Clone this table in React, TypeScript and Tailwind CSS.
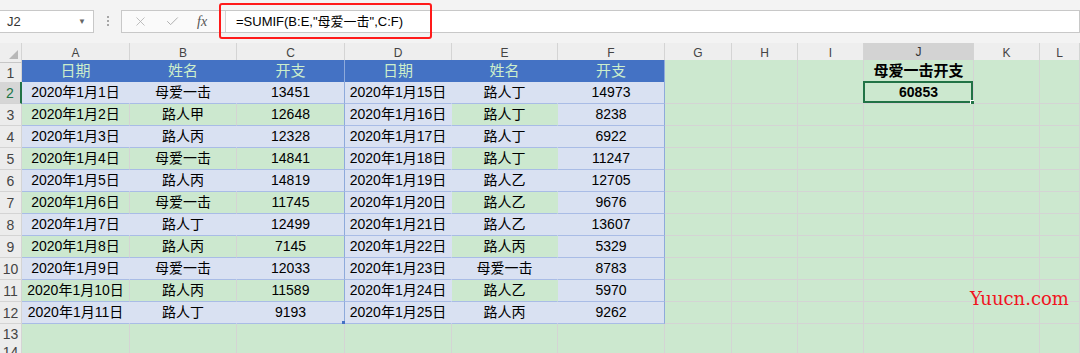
import { Check, X } from "lucide-react";

const left = [
  ["2020年1月1日", "母爱一击", "13451"],
  ["2020年1月2日", "路人甲", "12648"],
  ["2020年1月3日", "路人丙", "12328"],
  ["2020年1月4日", "母爱一击", "14841"],
  ["2020年1月5日", "路人丙", "14819"],
  ["2020年1月6日", "母爱一击", "11745"],
  ["2020年1月7日", "路人丁", "12499"],
  ["2020年1月8日", "路人丙", "7145"],
  ["2020年1月9日", "母爱一击", "12033"],
  ["2020年1月10日", "路人丙", "11589"],
  ["2020年1月11日", "路人丁", "9193"],
];

const right = [
  ["2020年1月15日", "路人丁", "14973"],
  ["2020年1月16日", "路人丁", "8238"],
  ["2020年1月17日", "路人丁", "6922"],
  ["2020年1月18日", "路人丁", "11247"],
  ["2020年1月19日", "路人乙", "12705"],
  ["2020年1月20日", "路人乙", "9676"],
  ["2020年1月21日", "路人乙", "13607"],
  ["2020年1月22日", "路人丙", "5329"],
  ["2020年1月23日", "母爱一击", "8783"],
  ["2020年1月24日", "路人乙", "5970"],
  ["2020年1月25日", "路人丙", "9262"],
];

const COLS = ["A", "B", "C", "D", "E", "F", "G", "H", "I", "J", "K", "L"];
const GRID = "grid grid-cols-[22px_108px_107px_108px_107px_106px_107px_67px_66px_66px_110px_66px_1fr]";

type Fill = "lav" | "none" | "head";
type Edge = "grid" | "blue" | "none";

const fillCls: Record<Fill, string> = {
  lav: "bg-[#d9e1f2] text-black",
  none: "bg-[#cce8cf] text-black",
  head: "bg-[#4472c4] text-[#cdeecb] text-[15px]",
};
const rightCls: Record<Edge, string> = {
  grid: "border-r border-r-[#d4d4d4]",
  blue: "border-r border-r-[#8eaadb]",
  none: "border-r border-r-transparent",
};
const bottomCls: Record<Edge, string> = {
  grid: "border-b border-b-[#d4d4d4]",
  blue: "border-b border-b-[#a9bce6]",
  none: "border-b border-b-transparent",
};

function Cell({
  fill,
  r,
  b,
  children,
}: {
  fill: Fill;
  r: Edge;
  b: Edge;
  children?: React.ReactNode;
}) {
  return (
    <div className={`relative flex items-center justify-center whitespace-nowrap ${fillCls[fill]} ${rightCls[r]} ${bottomCls[b]}`}>
      {children}
    </div>
  );
}

function RowHead({ n, active }: { n: number; active?: boolean }) {
  return active ? (
    <div className="flex items-end justify-center bg-[#d6d6d6] border-r-2 border-r-[#217346] border-b border-b-[#d4d4d4] text-[14px] leading-[20px] text-[#217346]">
      {n}
    </div>
  ) : (
    <div className="flex items-end justify-center bg-[#ececec] border-r border-r-[#d4d4d4] border-b border-b-[#d4d4d4] text-[14px] leading-[20px] text-[#444]">
      {n}
    </div>
  );
}

function sheetCells(from: number, rowNum: number) {
  return COLS.slice(from).map((c) => {
    if (c === "J" && rowNum === 1)
      return (
        <Cell key={c} fill="none" r="grid" b="grid">
          <span className="text-[15px] font-bold">母爱一击开支</span>
        </Cell>
      );
    if (c === "J" && rowNum === 2)
      return (
        <Cell key={c} fill="none" r="grid" b="grid">
          <span className="text-[14px] font-bold">60853</span>
          <div className="absolute -left-[1px] -top-[1px] right-0 bottom-0 border-2 border-[#217346]" />
          <div className="absolute -right-[3px] -bottom-[3px] h-[6px] w-[6px] bg-[#217346] border border-white" />
        </Cell>
      );
    return <Cell key={c} fill="none" r="grid" b="grid" />;
  });
}

function DataRow({ i }: { i: number }) {
  const rowNum = i + 2;
  const odd = rowNum % 2 === 1;
  const fills: Fill[] = odd
    ? ["none", "none", "none", "lav", "none", "lav"]
    : ["lav", "lav", "lav", "lav", "lav", "lav"];
  const vals = [...left[i], ...right[i]];
  return (
    <div className={`${GRID} h-[22px]`}>
      <RowHead n={rowNum} active={rowNum === 2} />
      {vals.map((v, c) => {
        let r: Edge = "none";
        if (c === 2 || c === 5) r = "blue";
        else if (fills[c] === "none" && fills[c + 1] === "none") r = "grid";
        return (
          <Cell key={c} fill={fills[c]} r={r} b="blue">
            <span className="text-[14px]">{v}</span>
            {rowNum === 12 && c === 2 && (
              <div className="absolute right-[-1px] bottom-[-1px] h-[3px] w-[3px] bg-[#4472c4]" />
            )}
          </Cell>
        );
      })}
      {sheetCells(6, rowNum)}
    </div>
  );
}

export default function App() {
  const headers = ["日期", "姓名", "开支", "日期", "姓名", "开支"];
  return (
    <div className="relative h-[353px] w-[1080px] overflow-hidden bg-[#cce8cf] text-[#222] font-['Liberation_Sans','Noto_Sans_CJK_SC',sans-serif]">
      {/* formula bar */}
      <div className="flex h-[43px] items-start bg-[#f3f3f3] pt-[10px]">
        <div className="flex h-[23px] w-[95px] -ml-[1px] items-center justify-between border border-[#c8c8c8] bg-white pl-[7px] pr-[7px] text-[13px] text-[#333]">
          <span>J2</span>
          <span className="text-[8px] text-[#666]">▼</span>
        </div>
        <div className="flex w-[27px] flex-col items-center gap-[2px] pt-[6px]">
          <span className="h-[2px] w-[2px] bg-[#a6a6a6]" />
          <span className="h-[2px] w-[2px] bg-[#a6a6a6]" />
          <span className="h-[2px] w-[2px] bg-[#a6a6a6]" />
        </div>
        <div className="flex h-[23px] flex-1 border border-[#c8c8c8] bg-white">
          <div className="flex w-[103px] items-center bg-[#fafafa]">
            <X size={15} strokeWidth={1.3} className="ml-[11px] text-[#b0b0b0]" />
            <Check size={15} strokeWidth={1.6} className="ml-[17px] text-[#b0b0b0]" />
            <span className="ml-[17px] font-['Liberation_Serif',serif] text-[14px] italic text-[#555]">fx</span>
          </div>
          <div className="w-px bg-[#d4d4d4]" />
          <div className="flex items-center pl-[10px] text-[13px] text-black">=SUMIF(B:E,"母爱一击",C:F)</div>
        </div>
      </div>

      {/* column headers */}
      <div className={`${GRID} h-[17px]`}>
        <div className="relative border-r border-r-[#d4d4d4] border-b border-b-[#c6c6c6] bg-[#eeeeee]">
          <div className="absolute bottom-[3px] right-[3px] h-0 w-0 border-l-[9px] border-l-transparent border-b-[9px] border-b-[#b8b8b8]" />
        </div>
        {COLS.map((c) =>
          c === "J" ? (
            <div key={c} className="flex items-center justify-center border-r border-r-[#d4d4d4] border-b-2 border-b-[#217346] bg-[#d3d3d3] text-[12px] text-[#333]">
              {c}
            </div>
          ) : (
            <div key={c} className="flex items-center justify-center border-r border-r-[#d4d4d4] border-b border-b-[#c6c6c6] bg-[#eeeeee] text-[12px] text-[#444]">
              {c}
            </div>
          )
        )}
      </div>

      {/* row 1 */}
      <div className={`${GRID} h-[22px]`}>
        <RowHead n={1} />
        {headers.map((h, c) => (
          <Cell key={c} fill="head" r={c === 2 || c === 5 ? "blue" : "none"} b="blue">
            {h}
          </Cell>
        ))}
        {sheetCells(6, 1)}
      </div>

      {left.map((_, i) => (
        <DataRow key={i} i={i} />
      ))}

      {[13, 14].map((n) => (
        <div key={n} className={`${GRID} h-[18px]`}>
          <RowHead n={n} />
          {sheetCells(0, n)}
        </div>
      ))}

      {/* watermark */}
      <div className="absolute left-[970px] top-[287px] font-['DejaVu_Serif',serif] text-[18px] leading-[24px] text-[#f0141e]">
        Yuucn.com
      </div>

      {/* annotation */}
      <div className="absolute left-[219px] top-[3px] h-[36px] w-[213px] rounded-[3px] border-2 border-[#ff1a1a]" />
    </div>
  );
}
